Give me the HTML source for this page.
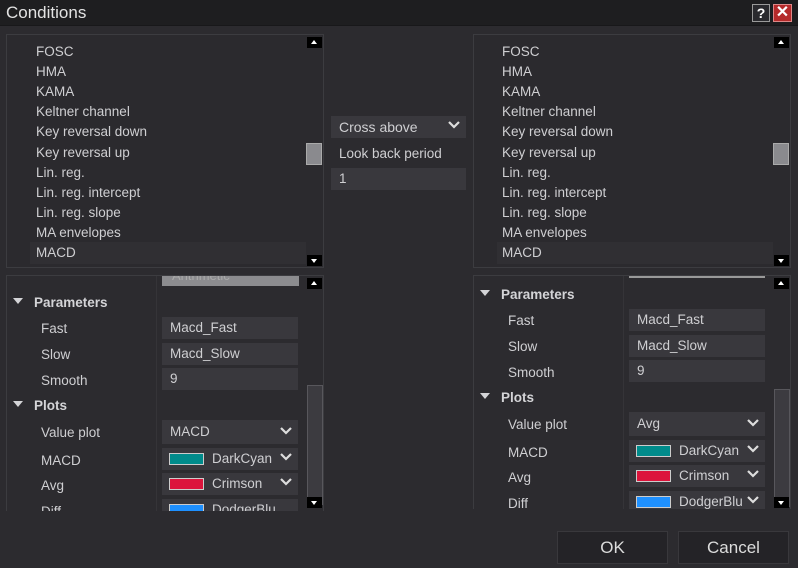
<!DOCTYPE html>
<html><head><meta charset="utf-8"><style>
*{margin:0;padding:0;box-sizing:border-box}
body{width:798px;height:568px;background:#2c2b2f;font-family:"Liberation Sans",sans-serif;font-size:13.5px;color:#cfcfd2;position:relative;overflow:hidden}
.a{position:absolute}
.title{left:0;top:0;width:798px;height:26px;background:#1e1e20;border-bottom:1px solid #18181a}
.title span{position:absolute;left:6px;top:3px;font-size:17px;color:#e2e2e2}
.box{border:1px solid #3c3c40;background:#2b2a2e}
.it{position:absolute;white-space:nowrap;line-height:16px}
.sb{background:#000;width:15px;height:11px}
.sb::after{content:"";position:absolute;left:4px;border-left:3.5px solid transparent;border-right:3.5px solid transparent}
.up::after{top:3px;border-bottom:4px solid #fff}
.dn::after{top:4px;border-top:4px solid #fff}
.inp{background:#39383d;height:22px;width:136px;padding:4px 8px;line-height:14px;color:#cfcfd2}
.chev{position:absolute;right:6px;top:4px;width:12px;height:10px}
.sw{position:absolute;left:7px;top:5px;width:35px;height:12px;border:1px solid #ccc}
.hd{font-weight:bold;color:#d4d4d7}
.tri{position:absolute;width:0;height:0;border-left:5px solid transparent;border-right:5px solid transparent;border-top:6px solid #d4d4d7}
.btn{background:#242327;border:1px solid #39383c;width:111px;height:33px;text-align:center;line-height:31px;font-size:17px;color:#dcdcdc}
.thumb{background:#3c3b40;border:1px solid #58575c}
</style></head><body>
<div class="a title"><span>Conditions</span>
<div class="a" style="left:752px;top:4px;width:18px;height:18px;background:#2a2a2e;border:1px solid #9a9a9a;color:#fff;font-weight:bold;font-size:14px;text-align:center;line-height:16px">?</div>
<div class="a" style="left:773px;top:4px;width:19px;height:18px;background:#b52a2a;border:1px solid #d88;color:#fff;font-weight:bold;font-size:16px;text-align:center;line-height:16px">✕</div>
</div>

<!-- left list -->
<div class="a box" style="left:6px;top:34px;width:318px;height:234px"></div>
<div class="a" style="left:30px;top:242px;width:276px;height:22px;background:#302f33"></div>
<div class="a sb up" style="left:307px;top:37px"></div>
<div class="a sb dn" style="left:307px;top:255px"></div>
<div class="a" style="left:306px;top:143px;width:16px;height:22px;background:#8a8a8e;border:1px solid #aaa"></div>
<div class="a it" style="left:36px;top:44px">FOSC</div>
<div class="a it" style="left:36px;top:64px">HMA</div>
<div class="a it" style="left:36px;top:84px">KAMA</div>
<div class="a it" style="left:36px;top:104px">Keltner channel</div>
<div class="a it" style="left:36px;top:124px">Key reversal down</div>
<div class="a it" style="left:36px;top:145px">Key reversal up</div>
<div class="a it" style="left:36px;top:165px">Lin. reg.</div>
<div class="a it" style="left:36px;top:185px">Lin. reg. intercept</div>
<div class="a it" style="left:36px;top:205px">Lin. reg. slope</div>
<div class="a it" style="left:36px;top:225px">MA envelopes</div>
<div class="a it" style="left:36px;top:245px">MACD</div>

<!-- right list -->
<div class="a box" style="left:473px;top:34px;width:318px;height:234px"></div>
<div class="a" style="left:497px;top:242px;width:276px;height:22px;background:#302f33"></div>
<div class="a sb up" style="left:774px;top:37px"></div>
<div class="a sb dn" style="left:774px;top:255px"></div>
<div class="a" style="left:773px;top:143px;width:16px;height:22px;background:#8a8a8e;border:1px solid #aaa"></div>
<div class="a it" style="left:502px;top:44px">FOSC</div>
<div class="a it" style="left:502px;top:64px">HMA</div>
<div class="a it" style="left:502px;top:84px">KAMA</div>
<div class="a it" style="left:502px;top:104px">Keltner channel</div>
<div class="a it" style="left:502px;top:124px">Key reversal down</div>
<div class="a it" style="left:502px;top:145px">Key reversal up</div>
<div class="a it" style="left:502px;top:165px">Lin. reg.</div>
<div class="a it" style="left:502px;top:185px">Lin. reg. intercept</div>
<div class="a it" style="left:502px;top:205px">Lin. reg. slope</div>
<div class="a it" style="left:502px;top:225px">MA envelopes</div>
<div class="a it" style="left:502px;top:245px">MACD</div>

<!-- middle -->
<div class="a inp" style="left:331px;top:116px;width:135px;height:22px;font-size:14px">Cross above<svg class="chev" viewBox="0 0 12 10"><path d="M1 2l5 5 5-5" stroke="#ddd" stroke-width="2.2" fill="none"/></svg></div>
<div class="a it" style="left:339px;top:146px">Look back period</div>
<div class="a inp" style="left:331px;top:168px;width:135px">1</div>

<!-- left props -->
<div class="a" style="left:6px;top:275px;width:318px;height:236px;border:1px solid #3c3c40;border-bottom:none;overflow:hidden">
 <div class="a" style="left:155px;top:-8px;width:137px;height:18px;background:#8c8c8f;color:#aaa;padding-left:10px;line-height:16px;font-size:13px">Arithmetic</div>
 <div class="a" style="left:149px;top:0;width:1px;height:236px;background:#353438"></div>
 <div class="tri" style="left:6px;top:22px"></div><div class="a it hd" style="left:27px;top:19px">Parameters</div>
 <div class="a it" style="left:34px;top:45px">Fast</div><div class="a inp" style="left:155px;top:41px">Macd_Fast</div>
 <div class="a it" style="left:34px;top:71px">Slow</div><div class="a inp" style="left:155px;top:67px">Macd_Slow</div>
 <div class="a it" style="left:34px;top:97px">Smooth</div><div class="a inp" style="left:155px;top:92px">9</div>
 <div class="tri" style="left:6px;top:125px"></div><div class="a it hd" style="left:27px;top:122px">Plots</div>
 <div class="a it" style="left:34px;top:149px">Value plot</div><div class="a inp" style="left:155px;top:144px;height:24px;padding-top:5px">MACD<svg class="chev" style="top:6px" viewBox="0 0 12 10"><path d="M1 2l5 5 5-5" stroke="#ddd" stroke-width="2.2" fill="none"/></svg></div>
 <div class="a it" style="left:34px;top:177px">MACD</div><div class="a inp" style="left:155px;top:172px;padding-left:50px">DarkCyan<div class="sw" style="background:#008b8b"></div><svg class="chev" viewBox="0 0 12 10"><path d="M1 2l5 5 5-5" stroke="#ddd" stroke-width="2.2" fill="none"/></svg></div>
 <div class="a it" style="left:34px;top:202px">Avg</div><div class="a inp" style="left:155px;top:197px;padding-left:50px">Crimson<div class="sw" style="background:#dc143c"></div><svg class="chev" viewBox="0 0 12 10"><path d="M1 2l5 5 5-5" stroke="#ddd" stroke-width="2.2" fill="none"/></svg></div>
 <div class="a it" style="left:34px;top:228px">Diff</div><div class="a inp" style="left:155px;top:223px;padding-left:50px">DodgerBlu<div class="sw" style="background:#1e90ff"></div></div>
 <div class="a sb up" style="left:300px;top:2px"></div>
 <div class="a thumb" style="left:300px;top:109px;width:16px;height:120px"></div>
 <div class="a sb dn" style="left:300px;top:221px"></div>
</div>

<!-- right props -->
<div class="a" style="left:473px;top:275px;width:318px;height:234px;border:1px solid #3c3c40;border-bottom:none;overflow:hidden">
 <div class="a" style="left:155px;top:0;width:136px;height:2px;background:#999"></div>
 <div class="a" style="left:149px;top:0;width:1px;height:236px;background:#353438"></div>
 <div class="tri" style="left:6px;top:14px"></div><div class="a it hd" style="left:27px;top:11px">Parameters</div>
 <div class="a it" style="left:34px;top:37px">Fast</div><div class="a inp" style="left:155px;top:33px">Macd_Fast</div>
 <div class="a it" style="left:34px;top:63px">Slow</div><div class="a inp" style="left:155px;top:59px">Macd_Slow</div>
 <div class="a it" style="left:34px;top:89px">Smooth</div><div class="a inp" style="left:155px;top:84px">9</div>
 <div class="tri" style="left:6px;top:117px"></div><div class="a it hd" style="left:27px;top:114px">Plots</div>
 <div class="a it" style="left:34px;top:141px">Value plot</div><div class="a inp" style="left:155px;top:136px;height:24px;padding-top:5px">Avg<svg class="chev" style="top:6px" viewBox="0 0 12 10"><path d="M1 2l5 5 5-5" stroke="#ddd" stroke-width="2.2" fill="none"/></svg></div>
 <div class="a it" style="left:34px;top:169px">MACD</div><div class="a inp" style="left:155px;top:164px;padding-left:50px">DarkCyan<div class="sw" style="background:#008b8b"></div><svg class="chev" viewBox="0 0 12 10"><path d="M1 2l5 5 5-5" stroke="#ddd" stroke-width="2.2" fill="none"/></svg></div>
 <div class="a it" style="left:34px;top:194px">Avg</div><div class="a inp" style="left:155px;top:189px;padding-left:50px">Crimson<div class="sw" style="background:#dc143c"></div><svg class="chev" viewBox="0 0 12 10"><path d="M1 2l5 5 5-5" stroke="#ddd" stroke-width="2.2" fill="none"/></svg></div>
 <div class="a it" style="left:34px;top:220px">Diff</div><div class="a inp" style="left:155px;top:215px;padding-left:50px">DodgerBlu<div class="sw" style="background:#1e90ff"></div><svg class="chev" viewBox="0 0 12 10"><path d="M1 2l5 5 5-5" stroke="#ddd" stroke-width="2.2" fill="none"/></svg></div>
 <div class="a sb up" style="left:300px;top:2px"></div>
 <div class="a thumb" style="left:300px;top:113px;width:16px;height:118px"></div>
 <div class="a sb dn" style="left:300px;top:221px"></div>
</div>

<div class="a btn" style="left:557px;top:531px">OK</div>
<div class="a btn" style="left:678px;top:531px">Cancel</div>
</body></html>
